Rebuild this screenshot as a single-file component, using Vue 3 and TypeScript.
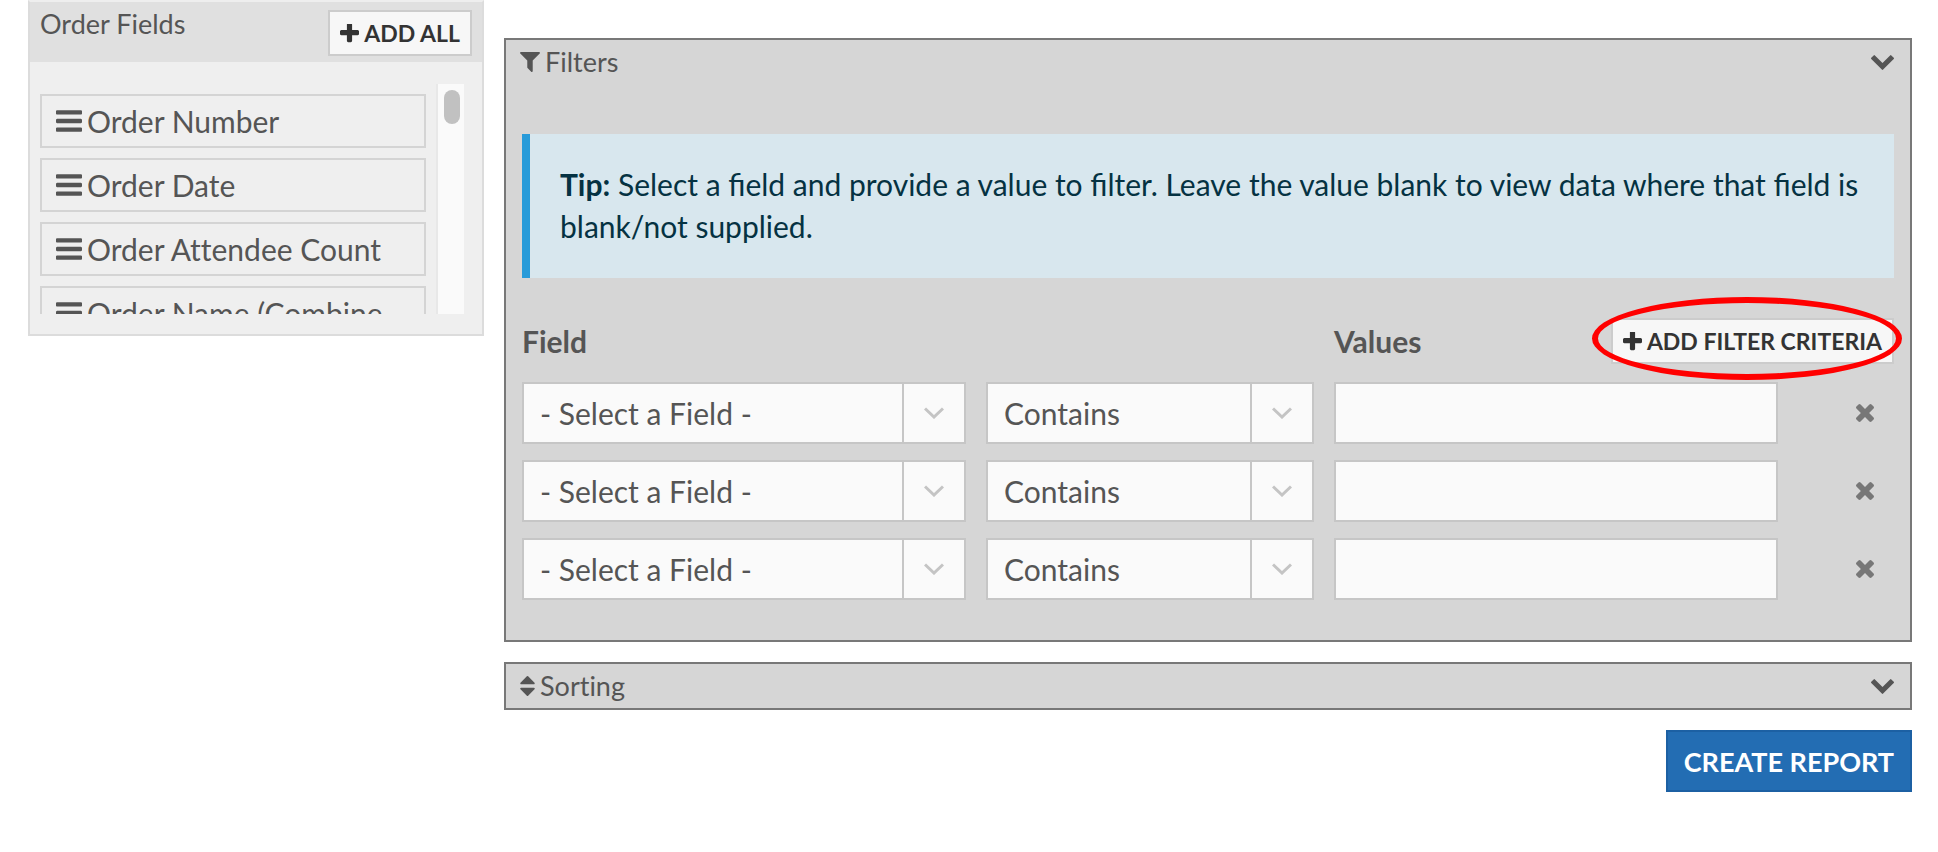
<script setup lang="ts">
import { ref } from 'vue'

interface Criterion {
  id: number
  field: string
  operator: string
  value: string
}

const orderFields: string[] = [
  'Order Number',
  'Order Date',
  'Order Attendee Count',
  'Order Name (Combine',
]

const criteria = ref<Criterion[]>(
  [1, 2, 3].map((id) => ({ id, field: '- Select a Field -', operator: 'Contains', value: '' })),
)
let nextId = 4

function addCriterion(): void {
  criteria.value.push({ id: nextId++, field: '- Select a Field -', operator: 'Contains', value: '' })
}

function removeCriterion(id: number): void {
  criteria.value = criteria.value.filter((c) => c.id !== id)
}

const plusPath =
  'M1600 736v192q0 40-28 68t-68 28h-416v416q0 40-28 68t-68 28h-192q-40 0-68-28t-28-68v-416h-416q-40 0-68-28t-28-68v-192q0-40 28-68t68-28h416v-416q0-40 28-68t68-28h192q40 0 68 28t28 68v416h416q40 0 68 28t28 68z'
const chevronPath =
  'M1683 808l-742 741q-19 19-45 19t-45-19l-742-741q-19-19-19-45.5t19-45.5l166-165q19-19 45-19t45 19l531 531 531-531q19-19 45-19t45 19l166 165q19 19 19 45.5t-19 45.5z'
</script>

<template>
  <div class="page">
    <aside class="sidebar">
      <header class="sidebar-head">
        <h2 class="title">Order Fields</h2>
        <button type="button" class="btn-small">
          <svg class="icon-plus" viewBox="192 192 1408 1408" aria-hidden="true"><path :d="plusPath" /></svg>
          <span>ADD ALL</span>
        </button>
      </header>
      <div class="sidebar-body">
        <ul class="field-list">
          <li v-for="name in orderFields" :key="name" class="field-item">
            <svg class="icon-bars" viewBox="128 256 1536 1280" aria-hidden="true">
              <path
                d="M1664 1344v128q0 26-19 45t-45 19h-1408q-26 0-45-19t-19-45v-128q0-26 19-45t45-19h1408q26 0 45 19t19 45zm0-512v128q0 26-19 45t-45 19h-1408q-26 0-45-19t-19-45v-128q0-26 19-45t45-19h1408q26 0 45 19t19 45zm0-512v128q0 26-19 45t-45 19h-1408q-26 0-45-19t-19-45v-128q0-26 19-45t45-19h1408q26 0 45 19t19 45z"
              />
            </svg>
            <span>{{ name }}</span>
          </li>
        </ul>
        <div class="scroll-track"><div class="scroll-thumb"></div></div>
      </div>
    </aside>

    <main class="main">
      <section class="panel">
        <header class="panel-head">
          <svg class="icon-filter" viewBox="190 256 1412 1408" aria-hidden="true">
            <path
              d="M1595 295q17 41-14 70l-493 493v742q0 42-39 59-13 5-25 5-27 0-45-19l-256-256q-19-19-19-45v-486l-493-493q-31-29-14-70 17-39 59-39h1280q42 0 59 39z"
            />
          </svg>
          <h2 class="title">Filters</h2>
          <button type="button" class="toggle" aria-label="Toggle filters">
            <svg viewBox="90 533 1612 1035" aria-hidden="true"><path :d="chevronPath" /></svg>
          </button>
        </header>

        <div class="panel-body">
          <p class="tip">
            <strong>Tip:</strong> Select a field and provide a value to filter. Leave the value blank to view data
            where that field is blank/not supplied.
          </p>

          <div class="columns labels">
            <h3 class="label label-field">Field</h3>
            <h3 class="label label-values">Values</h3>
            <div class="add-wrap">
              <button type="button" class="btn-small" @click="addCriterion">
                <svg class="icon-plus" viewBox="192 192 1408 1408" aria-hidden="true"><path :d="plusPath" /></svg>
                <span>ADD FILTER CRITERIA</span>
              </button>
              <div class="highlight"></div>
            </div>
          </div>

          <div v-for="c in criteria" :key="c.id" class="columns row">
            <div class="select wide">
              <select v-model="c.field" aria-label="Field">
                <option>- Select a Field -</option>
                <option v-for="name in orderFields" :key="name">{{ name }}</option>
              </select>
              <span class="caret"><svg viewBox="0 0 20 12" aria-hidden="true"><path d="M1 1.5 10 10 19 1.5" /></svg></span>
            </div>
            <div class="select medium">
              <select v-model="c.operator" aria-label="Operator">
                <option>Contains</option>
              </select>
              <span class="caret"><svg viewBox="0 0 20 12" aria-hidden="true"><path d="M1 1.5 10 10 19 1.5" /></svg></span>
            </div>
            <input v-model="c.value" class="value wide" type="text" aria-label="Value" />
            <button type="button" class="remove" aria-label="Remove filter" @click="removeCriterion(c.id)">
              <svg viewBox="302 366 1188 1188" aria-hidden="true">
                <path
                  d="M1490 1322q0 40-28 68l-136 136q-28 28-68 28t-68-28l-294-294-294 294q-28 28-68 28t-68-28l-136-136q-28-28-28-68t28-68l294-294-294-294q-28-28-28-68t28-68l136-136q28-28 68-28t68 28l294 294 294-294q28-28 68-28t68 28l136 136q28 28 28 68t-28 68l-294 294 294 294q28 28 28 68z"
                />
              </svg>
            </button>
          </div>
        </div>
      </section>

      <section class="panel">
        <header class="panel-head">
          <svg class="icon-sort" viewBox="384 192 1024 1408" aria-hidden="true">
            <path
              d="M1408 1088q0 26-19 45l-448 448q-19 19-45 19t-45-19l-448-448q-19-19-19-45t19-45 45-19h896q26 0 45 19t19 45zm0-384q0 26-19 45t-45 19h-896q-26 0-45-19t-19-45 19-45l448-448q19-19 45-19t45 19l448 448q19 19 19 45z"
            />
          </svg>
          <h2 class="title">Sorting</h2>
          <button type="button" class="toggle" aria-label="Toggle sorting">
            <svg viewBox="90 533 1612 1035" aria-hidden="true"><path :d="chevronPath" /></svg>
          </button>
        </header>
      </section>

      <button type="button" class="create">CREATE REPORT</button>
    </main>
  </div>
</template>

<style>
body {
  background: #fff;
}
</style>

<style scoped>
.page,
.page * {
  box-sizing: border-box;
}

.page {
  display: grid;
  grid-template-columns: repeat(12, minmax(0, 1fr));
  column-gap: 20px;
  align-items: start;
  padding: 0 26px 60px 28px;
  font-family: Lato, 'Liberation Sans', sans-serif;
  font-size: 30px;
  line-height: 42px;
  color: #555;
}

button,
select,
input {
  margin: 0;
  font-family: inherit;
  color: inherit;
  border-radius: 0;
}

button {
  cursor: pointer;
}

svg {
  display: block;
  flex: none;
  fill: currentColor;
}

.title {
  margin: 0;
  font-size: 27px;
  font-weight: 400;
  line-height: 44px;
  font-variant-ligatures: none;
}

.btn-small {
  display: flex;
  align-items: center;
  gap: 5px;
  height: 46px;
  padding: 0 10px;
  border: 2px solid #ccc;
  background: #f7f7f7;
  color: #333;
  font-size: 23px;
  font-weight: 700;
  line-height: 42px;
  white-space: nowrap;
}

.icon-plus {
  width: 19px;
  height: 19px;
}

/* Sidebar */
.sidebar {
  grid-column: span 3;
  border: 2px solid #dcdcdc;
  border-top-color: #eee;
  background: #efefef;
}

.sidebar-head {
  display: flex;
  justify-content: space-between;
  align-items: flex-start;
  height: 60px;
  padding: 0 10px;
  background: #e0e0e0;
}

.sidebar-head .btn-small {
  margin-top: 8px;
}

.sidebar-body {
  display: flex;
  gap: 10px;
  padding: 22px 18px 20px 10px;
}

.field-list {
  flex: 1;
  min-width: 0;
  height: 230px;
  margin: 0;
  padding: 10px 0 0;
  overflow: hidden;
  list-style: none;
}

.field-item {
  display: flex;
  align-items: center;
  gap: 5px;
  height: 54px;
  margin-bottom: 10px;
  padding: 0 14px;
  border: 2px solid #d4d4d4;
  white-space: nowrap;
  font-variant-ligatures: none;
}

.icon-bars {
  width: 26px;
  height: 22px;
}

.scroll-track {
  width: 28px;
  padding: 6px 4px 0 6px;
  border-left: 2px solid #e8e8e8;
  background: #fafafa;
}

.scroll-thumb {
  width: 16px;
  height: 34px;
  border-radius: 8px;
  background: #c1c1c1;
}

/* Main column */
.main {
  grid-column: span 9;
  display: flex;
  flex-direction: column;
  gap: 20px;
  padding-top: 38px;
}

.panel {
  border: 2px solid #787878;
  background: #d6d6d6;
}

.panel-head {
  display: flex;
  align-items: center;
  gap: 5px;
  height: 44px;
  padding: 0 16px 0 14px;
}

.icon-filter {
  width: 20px;
  height: 20px;
}

.icon-sort {
  width: 15px;
  height: 20px;
}

.toggle {
  margin-left: auto;
  padding: 0;
  border: 0;
  background: none;
}

.toggle svg {
  width: 23px;
  height: 15px;
}

.panel-body {
  padding: 50px 16px 40px;
}

.tip {
  margin: 0 0 40px;
  padding: 29px 30px 31px;
  border-left: 8px solid #289bd9;
  background: #d8e7ee;
  color: #053242;
}

.columns {
  display: grid;
  grid-template-columns: repeat(12, minmax(0, 1fr));
  column-gap: 20px;
  align-items: center;
}

.labels {
  margin-bottom: 18px;
}

.label {
  margin: 0;
  font-size: 30px;
  font-weight: 700;
}

.label-field {
  grid-column: 1 / span 7;
}

.label-values {
  grid-column: 8 / span 2;
}

.add-wrap {
  position: relative;
  grid-column: 10 / span 3;
  justify-self: end;
}

.highlight {
  position: absolute;
  inset: -21px -8px -16px -19px;
  border: 6px solid #f00;
  border-radius: 50%;
  pointer-events: none;
}

.row + .row {
  margin-top: 16px;
}

.wide {
  grid-column: span 4;
}

.medium {
  grid-column: span 3;
}

.select {
  display: grid;
  grid-template-columns: minmax(0, 1fr) 62px;
  height: 62px;
  border: 2px solid #c6c6c6;
  background: #fafafa;
}

.select select {
  grid-area: 1 / 1 / 2 / 3;
  appearance: none;
  padding: 0 62px 0 16px;
  border: 0;
  background: none;
  font-size: 30px;
}

.caret {
  grid-area: 1 / 2 / 2 / 3;
  display: flex;
  align-items: center;
  justify-content: center;
  border-left: 2px solid #c6c6c6;
  pointer-events: none;
}

.caret svg {
  width: 20px;
  height: 12px;
  fill: none;
  stroke: #c4c4c4;
  stroke-width: 3;
}

.value {
  width: 100%;
  height: 62px;
  padding: 0 16px;
  border: 2px solid #c6c6c6;
  background: #fafafa;
  font-size: 30px;
}

.remove {
  justify-self: end;
  padding: 20px;
  border: 0;
  background: none;
  color: #777;
}

.remove svg {
  width: 18px;
  height: 18px;
}

.create {
  align-self: flex-end;
  height: 62px;
  padding: 0 16px;
  border: 2px solid #1c60a3;
  background: #236db3;
  color: #fff;
  font-size: 27px;
  font-weight: 700;
}
</style>
